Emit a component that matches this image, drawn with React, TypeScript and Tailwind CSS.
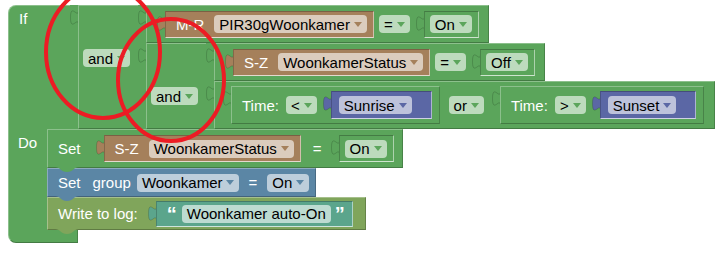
import React from 'react';

const GREEN = '#5ba55b';
const BROWN = '#a5805b';
const NAVY = '#5b67a5';
const STEEL = '#5b86a5';
const OLIVE = '#80a55b';
const TEAL = '#5ba58c';

// outer edge of a block: light top/left, dark bottom/right
const EDGE =
  'border-t border-l border-b border-r border-t-white/30 border-l-white/30 border-b-black/25 border-r-black/20';
// a block sitting inside an inline socket
const INSET =
  'border-t border-l border-b border-r border-t-black/25 border-l-black/20 border-b-white/70 border-r-white/50';

function Label({ children }: { children: React.ReactNode }) {
  return <span className="whitespace-nowrap text-[15px] leading-[17px] text-white">{children}</span>;
}

function Field({ text, color, arrow = true }: { text: string; color?: string; arrow?: boolean }) {
  return (
    <span className="inline-flex h-[18px] shrink-0 items-center whitespace-nowrap rounded-[4px] bg-white/60 px-[5px] text-[15px] leading-none text-black">
      {text}
      {arrow && (
        <svg className="ml-[4px] block" width="8" height="5" viewBox="0 0 8 5">
          <path d="M0 0H8L4 5Z" fill={color} />
        </svg>
      )}
    </span>
  );
}

// output tab on the left of a value block
function Plug({ fill, strip = '', children }: { fill: string; strip?: string; children: React.ReactNode }) {
  return (
    <div className="flex shrink-0 items-stretch">
      <div className={`w-[8px] shrink-0 ${strip}`}>
        <svg className="block" width="8" height="25" viewBox="0 0 8 25">
          <path
            d="M8.5,5 C8.5,15 0.5,-3 0.5,12.5 C0.5,28 8.5,10 8.5,20 Z"
            fill={fill}
            stroke="rgba(0,0,0,0.2)"
            strokeWidth="0.8"
          />
        </svg>
      </div>
      {children}
    </div>
  );
}

// little tab under a statement block
function Bump({ fill }: { fill: string }) {
  return (
    <svg className="absolute left-[7px] top-full z-10 block" width="24" height="6" viewBox="0 0 24 6">
      <path d="M0,0 C5,0 6,5 12,5 C18,5 19,0 24,0 Z" fill={fill} />
    </svg>
  );
}

function Item({ label, name }: { label: string; name: string }) {
  return (
    <div className={`flex h-[27px] items-center gap-[10px] bg-[#a5805b] pl-[10px] pr-[6px] ${INSET}`}>
      <Label>{label}</Label>
      <Field text={name} color={BROWN} />
    </div>
  );
}

function ValueBox({ text }: { text: string }) {
  return (
    <div className={`flex h-[27px] items-center bg-[#5ba55b] pl-[5px] pr-[6px] ${INSET}`}>
      <Field text={text} color={GREEN} />
    </div>
  );
}

function Compare({ label, name, value }: { label: string; name: string; value: string }) {
  return (
    <div className={`flex h-[38px] items-center bg-[#5ba55b] pl-[10px] pr-[9px] ${EDGE}`}>
      <Plug fill={BROWN}>
        <Item label={label} name={name} />
      </Plug>
      <span className="ml-[5px] flex">
        <Field text="=" color={GREEN} />
      </span>
      <span className="ml-[6px] flex">
        <Plug fill={GREEN}>
          <ValueBox text={value} />
        </Plug>
      </span>
    </div>
  );
}

function TimeBlock({ op, sun }: { op: string; sun: string }) {
  return (
    <div className={`flex h-[38px] items-center bg-[#5ba55b] pl-[10px] pr-[7px] ${EDGE}`}>
      <Label>Time:</Label>
      <span className="ml-[7px] flex">
        <Field text={op} color={GREEN} />
      </span>
      <span className="ml-[6px] flex">
        <Plug fill={NAVY}>
          <div className={`flex h-[28px] items-center bg-[#5b67a5] pl-[7px] pr-[19px] ${INSET}`}>
            <Field text={sun} color={NAVY} />
          </div>
        </Plug>
      </span>
    </div>
  );
}

function OrBlock() {
  return (
    <div className={`flex h-[48px] items-center bg-[#5ba55b] pl-[8px] pr-[10px] ${EDGE}`}>
      <Plug fill={GREEN}>
        <TimeBlock op="<" sun="Sunrise" />
      </Plug>
      <span className="ml-[9px] flex">
        <Field text="or" color={GREEN} />
      </span>
      <span className="ml-[8px] flex">
        <Plug fill={GREEN}>
          <TimeBlock op=">" sun="Sunset" />
        </Plug>
      </span>
    </div>
  );
}

function AndBlock({ first, second }: { first: React.ReactNode; second: React.ReactNode }) {
  return (
    <div className="flex flex-col">
      <div className="flex">
        <div className="w-[60px] shrink-0 border-l border-t border-l-white/30 border-t-white/30 bg-[#5ba55b]" />
        <Plug fill={GREEN} strip="bg-[#5ba55b]">
          {first}
        </Plug>
      </div>
      <div className="flex">
        <div className="flex w-[60px] shrink-0 items-start border-b border-l border-b-black/25 border-l-white/30 bg-[#5ba55b] pl-[4px] pt-[6px]">
          <Field text="and" color={GREEN} />
        </div>
        <Plug fill={GREEN} strip="bg-[#5ba55b]">
          {second}
        </Plug>
      </div>
    </div>
  );
}

function SetStatus() {
  return (
    <div className={`relative flex h-[39px] items-center bg-[#5ba55b] pl-[10px] pr-[8px] ${EDGE}`}>
      <Label>Set</Label>
      <span className="ml-[15px] flex">
        <Plug fill={BROWN}>
          <Item label="S-Z" name="WoonkamerStatus" />
        </Plug>
      </span>
      <span className="ml-[12px]">
        <Label>=</Label>
      </span>
      <span className="ml-[9px] flex">
        <Plug fill={GREEN}>
          <ValueBox text="On" />
        </Plug>
      </span>
      <Bump fill={GREEN} />
    </div>
  );
}

function SetGroup() {
  return (
    <div className={`relative flex h-[29px] items-center bg-[#5b86a5] pl-[10px] pr-[6px] ${EDGE}`}>
      <Label>Set</Label>
      <span className="ml-[12px]">
        <Label>group</Label>
      </span>
      <span className="ml-[6px] flex">
        <Field text="Woonkamer" color={STEEL} />
      </span>
      <span className="ml-[9px]">
        <Label>=</Label>
      </span>
      <span className="ml-[10px] flex">
        <Field text="On" color={STEEL} />
      </span>
      <Bump fill={STEEL} />
    </div>
  );
}

function WriteLog() {
  return (
    <div className={`relative flex h-[33px] items-center bg-[#80a55b] pl-[10px] pr-[12px] ${EDGE}`}>
      <Label>Write to log:</Label>
      <span className="ml-[10px] flex">
        <Plug fill={TEAL}>
          <div className={`flex h-[26px] items-center bg-[#5ba58c] pl-[10px] pr-[7px] ${INSET}`}>
            <span className="text-[20px] font-bold leading-[20px] text-white">“</span>
            <span className="ml-[5px] flex">
              <Field text="Woonkamer auto-On" arrow={false} />
            </span>
            <span className="ml-[4px] text-[20px] font-bold leading-[20px] text-white">”</span>
          </div>
        </Plug>
      </span>
      <Bump fill={OLIVE} />
    </div>
  );
}

export default function App() {
  return (
    <div className="relative h-[258px] w-[723px] overflow-hidden bg-white pl-[8px] pt-[5px] font-['Liberation_Sans',Arial,sans-serif]">
      <div className="flex w-max flex-col">
        {/* If */}
        <div className="flex">
          <div className="flex w-[62px] shrink-0 items-start rounded-tl-[8px] border-l border-t border-l-white/30 border-t-white/30 bg-[#5ba55b] pl-[10px] pt-[4px]">
            <Label>If</Label>
          </div>
          <Plug fill={GREEN} strip="bg-[#5ba55b]">
            <AndBlock
              first={<Compare label="M-R" name="PIR30gWoonkamer" value="On" />}
              second={<AndBlock first={<Compare label="S-Z" name="WoonkamerStatus" value="Off" />} second={<OrBlock />} />}
            />
          </Plug>
        </div>
        {/* Do */}
        <div className="flex">
          <div className="flex w-[39px] shrink-0 items-start border-l border-l-white/30 bg-[#5ba55b] pl-[9px] pt-[5px]">
            <Label>Do</Label>
          </div>
          <div className="flex flex-col items-start">
            <SetStatus />
            <SetGroup />
            <WriteLog />
          </div>
        </div>
        <div className="h-[13px] w-[70px] rounded-bl-[8px] border-b border-l border-r border-b-black/25 border-l-white/30 border-r-black/20 bg-[#5ba55b]" />
      </div>

      {/* red annotation rings */}
      <svg className="pointer-events-none absolute inset-0" width="723" height="258" viewBox="0 0 723 258">
        <ellipse cx="103" cy="52" rx="57" ry="66" fill="none" stroke="#ec1c24" strokeWidth="4" />
        <ellipse cx="171" cy="80" rx="53" ry="61" fill="none" stroke="#ec1c24" strokeWidth="4" />
      </svg>
    </div>
  );
}
